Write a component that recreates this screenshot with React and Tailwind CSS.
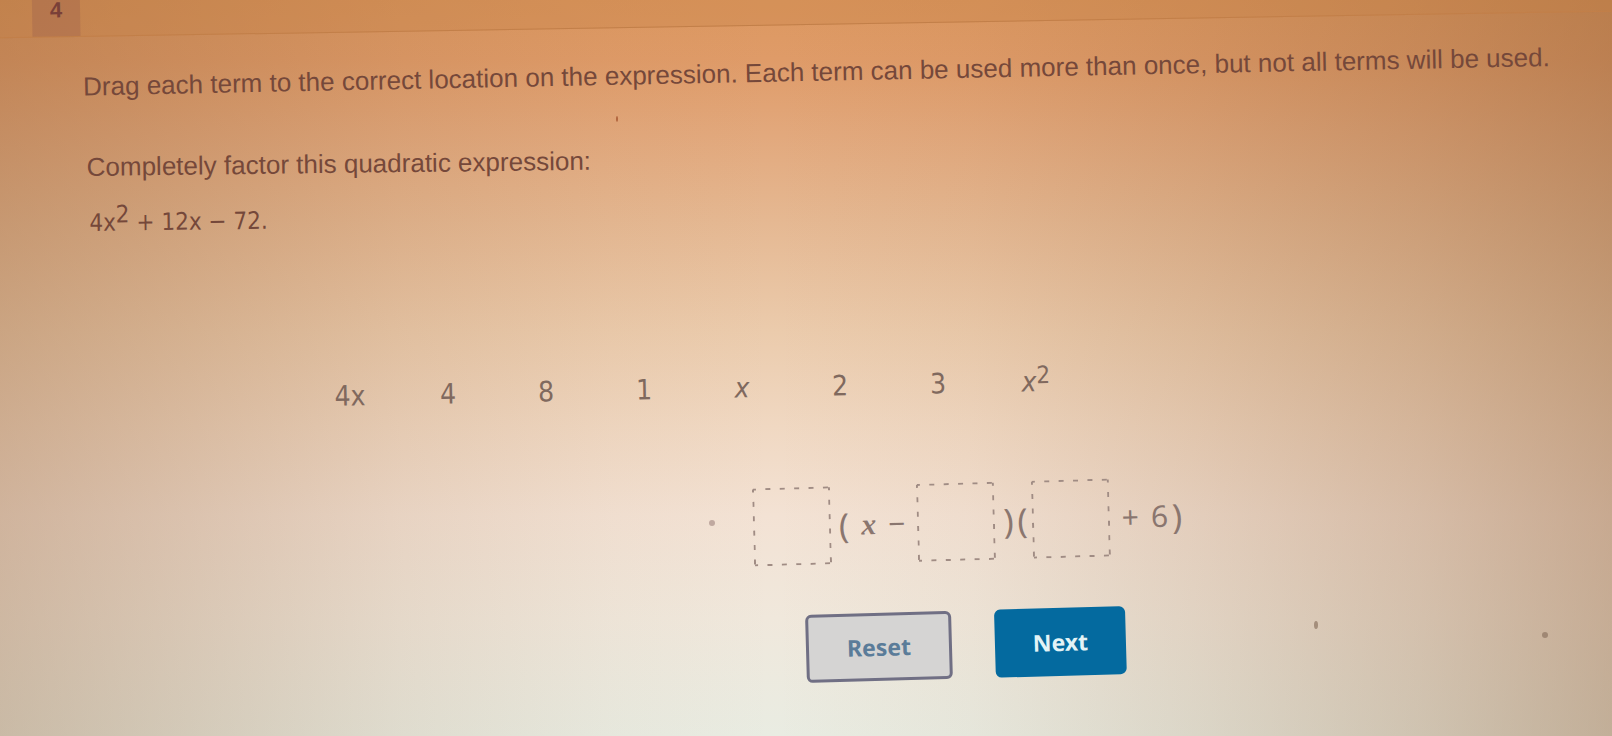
import React from "react";

const terms = [
  { id: "4x", label: "4x" },
  { id: "4", label: "4" },
  { id: "8", label: "8" },
  { id: "1", label: "1" },
  { id: "x", label: <i>x</i> },
  { id: "2", label: "2" },
  { id: "3", label: "3" },
  {
    id: "x2",
    label: (
      <>
        <i>x</i>
        <Power>2</Power>
      </>
    ),
  },
];

function Power({ children }) {
  return <sup className="relative -top-2 align-baseline text-[24px] leading-none">{children}</sup>;
}

function DropZone({ label }) {
  return (
    <button type="button" aria-label={label} className="h-[78px] w-[78px] shrink-0">
      <svg viewBox="0 0 78 78" className="block h-full w-full" fill="none" stroke="#a08c84" strokeWidth="2">
        <path d="M1 1H77M1 77H77" strokeDasharray="5 9.4" strokeDashoffset="2" />
        <path d="M1 1V77M77 1V77" strokeDasharray="5 9.4" strokeDashoffset="2" />
      </svg>
    </button>
  );
}

function Specks() {
  return (
    <svg aria-hidden="true" className="pointer-events-none absolute left-0 top-0 h-[736px] w-[1612px]" fill="#8d7562">
      <ellipse cx="617" cy="119" rx="1" ry="3" fill="#b0633c" />
      <circle cx="712" cy="523" r="3" fill="#c0a9a0" />
      <ellipse cx="1316" cy="625" rx="2" ry="4" opacity=".7" />
      <circle cx="1545" cy="635" r="3" opacity=".7" />
    </svg>
  );
}

export default function App() {
  return (
    <div className="relative min-h-screen overflow-hidden bg-[linear-gradient(90deg,rgba(140,90,50,0.34)_0%,rgba(140,90,50,0.23)_12%,rgba(140,90,50,0.11)_25%,rgba(140,90,50,0.03)_38%,rgba(140,90,50,0)_48%,rgba(140,90,50,0.04)_60%,rgba(140,90,50,0.15)_74%,rgba(140,90,50,0.28)_88%,rgba(140,90,50,0.42)_100%),linear-gradient(180deg,#dc9860_0%,#df9b68_8%,#e2a87c_18%,#e5b892_30%,#ebcbac_45%,#f0d8c2_58%,#f3e2d4_70%,#f0e8dc_84%,#e9ece2_100%)] font-['Liberation_Sans',Arial,sans-serif] text-[#75483a]">
      <header className="-mx-4 -mt-6 flex h-[49px] rotate-[-0.95deg] items-stretch border-b border-[#c27f49] bg-[#c88046]/30 pl-12">
        <div className="flex w-[48px] items-end justify-center bg-[#9c5f4c]/35 pb-4 text-[22px] font-bold leading-5 text-[#7a4038]">4</div>
      </header>

      <main>
        <p className="mt-[31px] rotate-[-1.15deg] whitespace-nowrap pl-[83px] text-[26px] leading-8">
          Drag each term to the correct location on the expression. Each term can be used more than once, but not all terms will be used.
        </p>
        <div className="mt-16 origin-left rotate-[-0.7deg] pl-[87px] text-[26px] leading-8">
          <p>Completely factor this quadratic expression:</p>
          <p className="mt-6 pl-[2px] font-['DejaVu_Sans_Condensed','DejaVu_Sans',sans-serif] text-[24px]">
            4x<Power>2</Power> + 12x − 72.
          </p>
        </div>

        <div className="mt-[127px] flex rotate-[-1.2deg] pl-[301px] font-['DejaVu_Sans_Condensed','DejaVu_Sans',sans-serif] text-[28px] leading-10 text-[#80695e]">
          {terms.map((term) => (
            <button key={term.id} type="button" draggable className="w-[98px] whitespace-nowrap text-center">
              {term.label}
            </button>
          ))}
        </div>

        <div className="mt-20 flex rotate-[-1.6deg] items-center pl-[753px] font-['Noto_Sans',sans-serif] text-[30px] leading-10 text-[#8a766f]">
          <DropZone label="Common factor" />
          <span className="pl-2 text-[34px]">(</span>
          <i className="px-3 font-['Liberation_Serif',serif] text-[30px] font-bold">x</i>
          <span className="pr-3">−</span>
          <DropZone label="Subtracted term" />
          <span className="pl-2 text-[34px]">)</span>
          <span className="px-1 text-[34px]">(</span>
          <DropZone label="First term of the second factor" />
          <span className="px-3">+</span>
          <span>6</span>
          <span className="pl-1 text-[34px]">)</span>
        </div>

        <div className="mt-[50px] flex rotate-[-1.6deg] gap-[43px] pl-[806px] font-['Noto_Sans',sans-serif] text-[23px] font-bold leading-7">
          <button type="button" className="h-[68px] w-[146px] rounded-md border-[3px] border-[#706f84] bg-[#d5d4d3] text-[#5b7c99]">
            Reset
          </button>
          <button type="button" className="h-[68px] w-[131px] rounded-md bg-[#046a9f] text-[#e3f3f6]">
            Next
          </button>
        </div>
      </main>
      <Specks />
    </div>
  );
}
